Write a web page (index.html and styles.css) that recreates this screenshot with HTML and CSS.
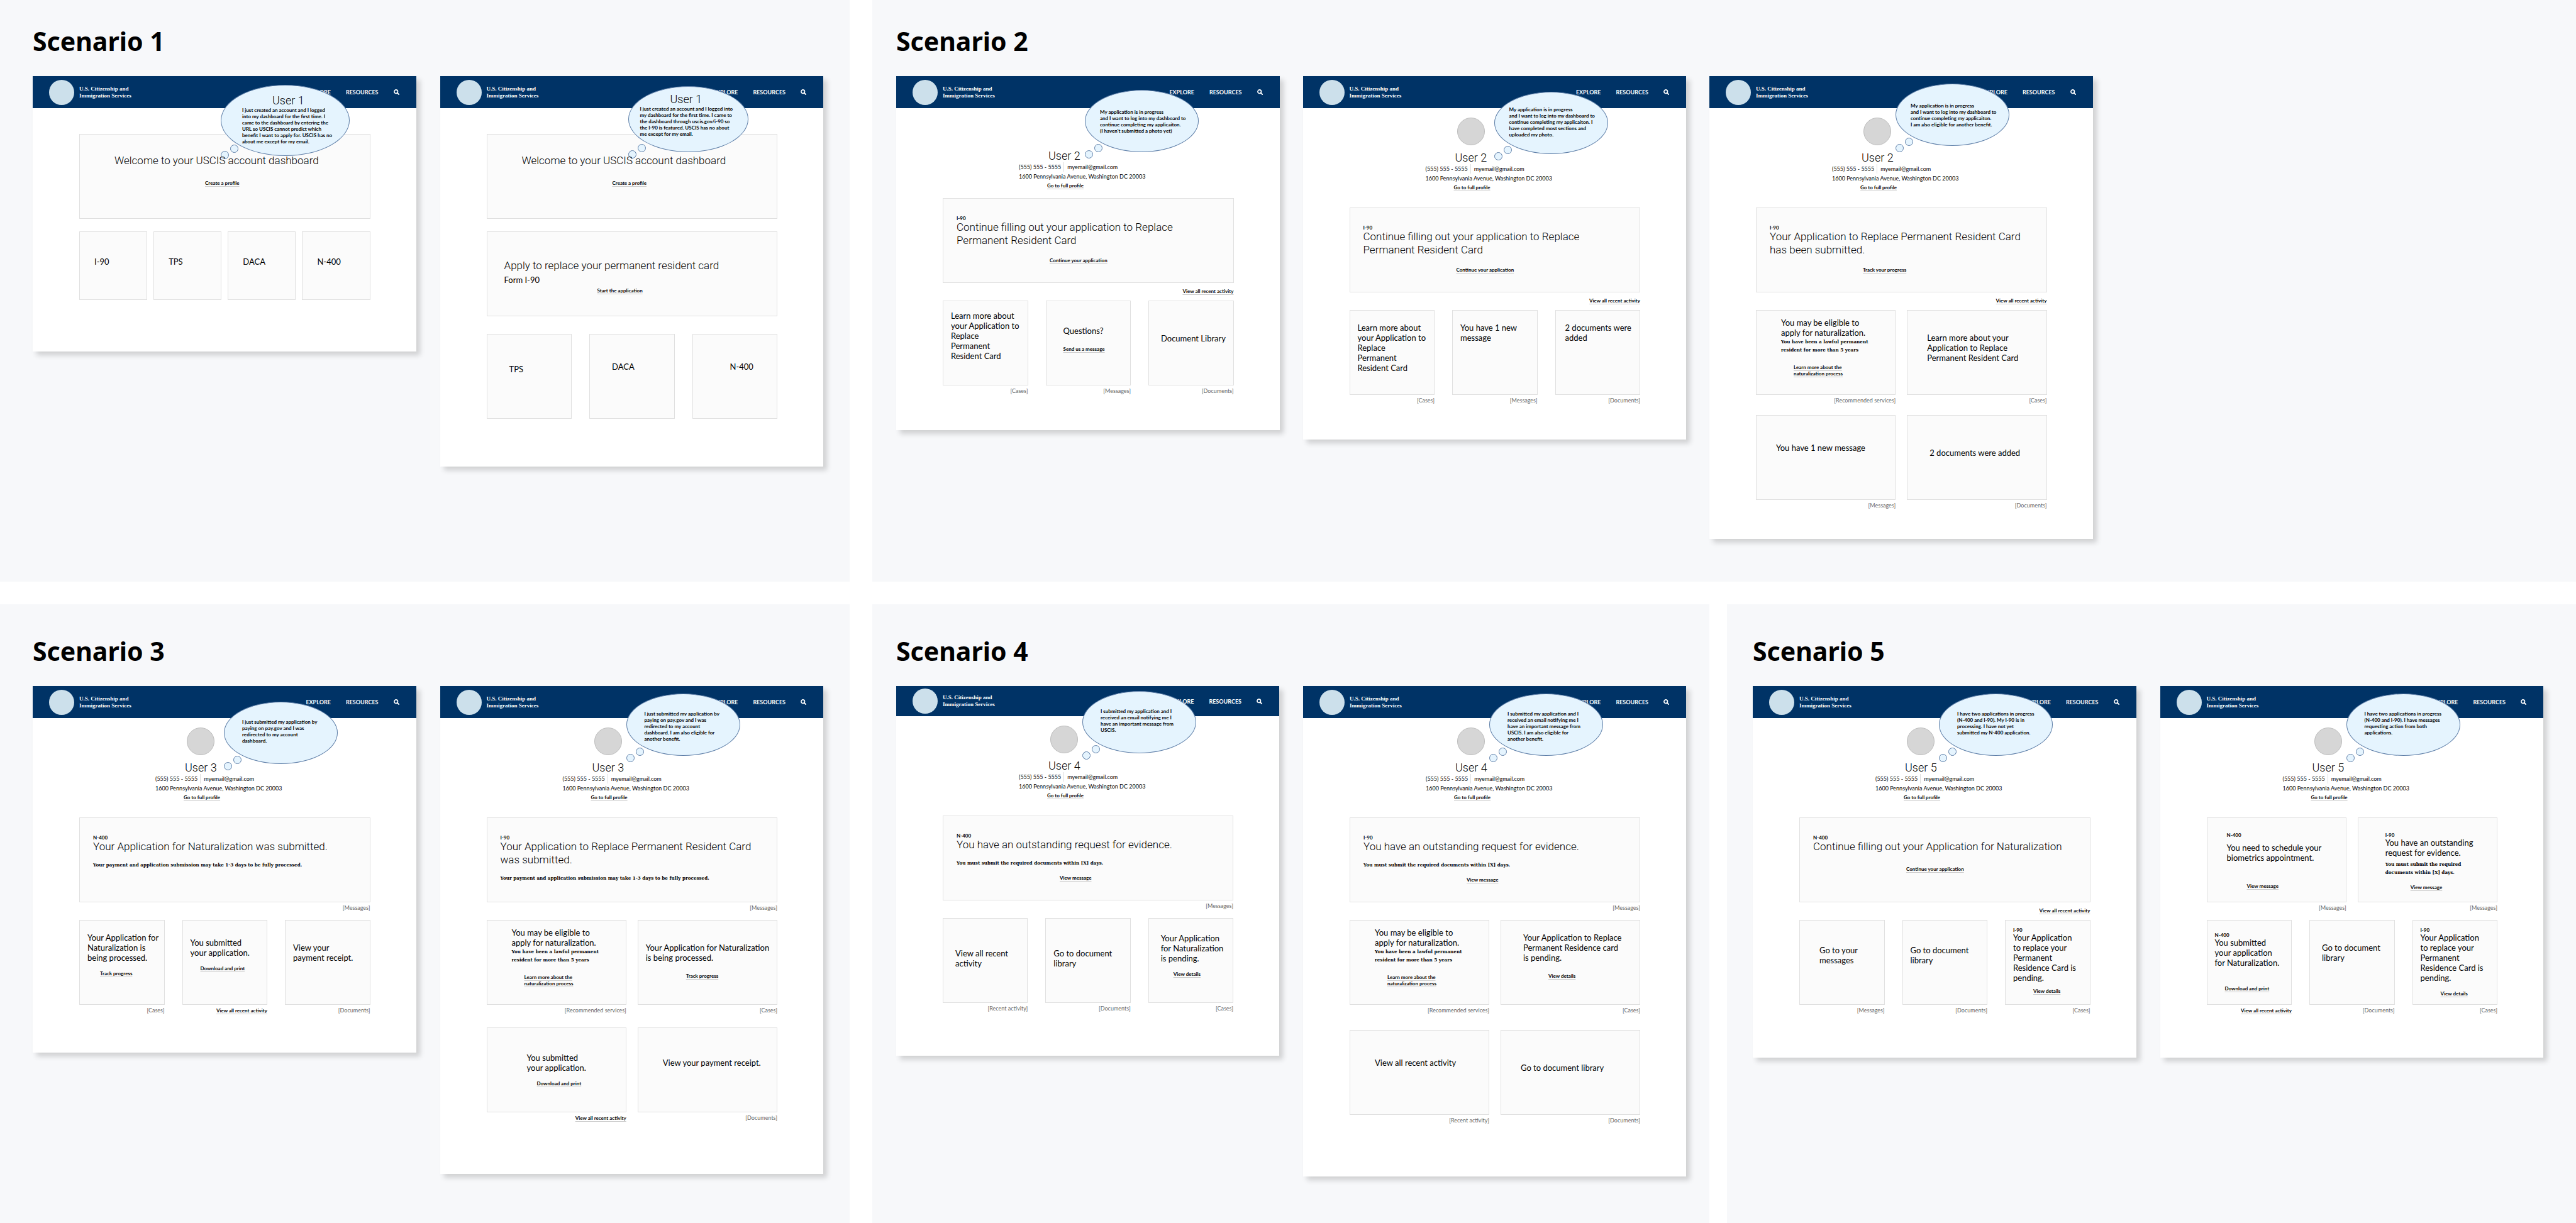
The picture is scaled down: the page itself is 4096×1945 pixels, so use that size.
FILE: index.html
```html
<!DOCTYPE html>
<html lang="en">
<head>
<meta charset="utf-8">
<title>USCIS dashboard scenarios</title>
<link rel="stylesheet" href="styles.css">
</head>
<body>
<svg class="sprite" aria-hidden="true">
  <symbol id="search" viewBox="0 0 10 10">
    <circle cx="4.1" cy="4.1" r="3.1" fill="none" stroke="currentColor" stroke-width="1.8"/>
    <path d="M6.3 6.3 9.1 9.1" stroke="currentColor" stroke-width="2" stroke-linecap="round"/>
  </symbol>
</svg>
<main class="board">
  <div class="row row-top">
    <section class="panel panel-1">
      <h1 class="title">Scenario 1</h1>
      <div class="frames">
        <article class="frame end-82">
          <header class="bar"><span class="logo"></span><p class="brand">U.S. Citizenship and<br>Immigration Services</p><nav class="nav"><a href="#">EXPLORE</a><a href="#">RESOURCES</a><a href="#" aria-label="Search"><svg class="icon"><use href="#search"/></svg></a></nav></header>
          <div class="bubble bubble-big"><h2 class="who">User 1</h2><p>I just created an account and I logged<br>into my dashboard for the first time. I<br>came to the dashboard by entering the<br>URL so USCIS cannot predict which<br>benefit I want to apply for. USCIS has no<br>about me except for my email.</p></div>
          <div class="content content-first">
            <div class="card hero pt-32 pl-56"><h3 class="headline">Welcome to your USCIS account dashboard</h3><a class="link mt-20 ml-144" href="#">Create a profile</a></div>
            <div class="cols cols-4 mt-20">
              <div class="card short pt-40 pl-24"><h4 class="name">I-90</h4></div>
              <div class="card short pt-40 pl-24"><h4 class="name">TPS</h4></div>
              <div class="card short pt-40 pl-24"><h4 class="name">DACA</h4></div>
              <div class="card short pt-40 pl-24"><h4 class="name">N-400</h4></div>
            </div>
          </div>
        </article>
        <article class="frame end-76">
          <header class="bar"><span class="logo"></span><p class="brand">U.S. Citizenship and<br>Immigration Services</p><nav class="nav"><a href="#">EXPLORE</a><a href="#">RESOURCES</a><a href="#" aria-label="Search"><svg class="icon"><use href="#search"/></svg></a></nav></header>
          <div class="bubble bubble-mid"><h2 class="who">User 1</h2><p>I just created an account and I logged into<br>my dashboard for the first time. I came to<br>the dashboard through uscis.gov/i-90 so<br>the I-90 is featured. USCIS has no about<br>me except for my email.</p></div>
          <div class="content content-first">
            <div class="card hero pt-32 pl-56"><h3 class="headline">Welcome to your USCIS account dashboard</h3><a class="link mt-20 ml-144" href="#">Create a profile</a></div>
            <div class="card hero mt-20 pt-44 pl-28"><h3 class="headline">Apply to replace your permanent resident card</h3><p class="name mt-4">Form I-90</p><a class="link mt-4 ml-148" href="#">Start the application</a></div>
            <div class="cols cols-3 mt-28">
              <div class="card pt-48 pl-36"><h4 class="name">TPS</h4></div>
              <div class="card pt-44 pl-36"><h4 class="name">DACA</h4></div>
              <div class="card pt-44 pl-60"><h4 class="name">N-400</h4></div>
            </div>
          </div>
        </article>
      </div>
    </section>
    <section class="panel panel-2">
      <h1 class="title">Scenario 2</h1>
      <div class="frames">
        <article class="frame end-43">
          <header class="bar"><span class="logo"></span><p class="brand">U.S. Citizenship and<br>Immigration Services</p><nav class="nav"><a href="#">EXPLORE</a><a href="#">RESOURCES</a><a href="#" aria-label="Search"><svg class="icon"><use href="#search"/></svg></a></nav></header>
          <div class="bubble bubble-plain"><p>My application is in progress<br>and I want to log into my dashboard to<br>continue completing my applicaiton.<br>(I haven't submitted a photo yet)</p></div>
          <div class="profile profile-plain"><h2 class="who">User 2</h2><p class="contact"><span>(555) 555 - 5555</span><span class="email">myemail@gmail.com</span></p><p class="contact">1600 Pennsylvania Avenue, Washington DC 20003</p><a class="link" href="#">Go to full profile</a></div>
          <div class="content">
            <div class="card hero hero-form"><p class="form">I-90</p><h3 class="headline">Continue filling out your application to Replace<br>Permanent Resident Card</h3><a class="link mt-16 ml-148" href="#">Continue your application</a></div>
            <div class="note note-low"><a class="link" href="#">View all recent activity</a></div>
            <div class="cols cols-3">
              <div><div class="card pt-16"><h4 class="name">Learn more about<br>your Application to<br>Replace<br>Permanent<br>Resident Card</h4></div><p class="note">[Cases]</p></div>
              <div><div class="card pt-40 pl-28"><h4 class="name">Questions?</h4><a class="link mt-16" href="#">Send us a message</a></div><p class="note">[Messages]</p></div>
              <div><div class="card pt-52 pl-20"><h4 class="name">Document Library</h4></div><p class="note">[Documents]</p></div>
            </div>
          </div>
        </article>
        <article class="frame end-43">
          <header class="bar"><span class="logo"></span><p class="brand">U.S. Citizenship and<br>Immigration Services</p><nav class="nav"><a href="#">EXPLORE</a><a href="#">RESOURCES</a><a href="#" aria-label="Search"><svg class="icon"><use href="#search"/></svg></a></nav></header>
          <div class="bubble bubble-low bubble-five"><p>My application is in progress<br>and I want to log into my dashboard to<br>continue completing my applicaiton. I<br>have completed most sections and<br>uploaded my photo.</p></div>
          <div class="profile"><span class="avatar"></span><h2 class="who">User 2</h2><p class="contact"><span>(555) 555 - 5555</span><span class="email">myemail@gmail.com</span></p><p class="contact">1600 Pennsylvania Avenue, Washington DC 20003</p><a class="link" href="#">Go to full profile</a></div>
          <div class="content">
            <div class="card hero hero-form"><p class="form">I-90</p><h3 class="headline">Continue filling out your application to Replace<br>Permanent Resident Card</h3><a class="link mt-16 ml-148" href="#">Continue your application</a></div>
            <div class="note note-low"><a class="link" href="#">View all recent activity</a></div>
            <div class="cols cols-3">
              <div><div class="card pt-20"><h4 class="name">Learn more about<br>your Application to<br>Replace<br>Permanent<br>Resident Card</h4></div><p class="note">[Cases]</p></div>
              <div><div class="card pt-20"><h4 class="name">You have 1 new<br>message</h4></div><p class="note">[Messages]</p></div>
              <div><div class="card pt-20 pl-16"><h4 class="name">2 documents were<br>added</h4></div><p class="note">[Documents]</p></div>
            </div>
          </div>
        </article>
        <article class="frame end-34">
          <header class="bar"><span class="logo"></span><p class="brand">U.S. Citizenship and<br>Immigration Services</p><nav class="nav"><a href="#">EXPLORE</a><a href="#">RESOURCES</a><a href="#" aria-label="Search"><svg class="icon"><use href="#search"/></svg></a></nav></header>
          <div class="bubble bubble-left"><p>My application is in progress<br>and I want to log into my dashboard to<br>continue completing my applicaiton.<br>I am also eligible for another benefit.</p></div>
          <div class="profile"><span class="avatar"></span><h2 class="who">User 2</h2><p class="contact"><span>(555) 555 - 5555</span><span class="email">myemail@gmail.com</span></p><p class="contact">1600 Pennsylvania Avenue, Washington DC 20003</p><a class="link" href="#">Go to full profile</a></div>
          <div class="content">
            <div class="card hero hero-form"><p class="form">I-90</p><h3 class="headline">Your Application to Replace Permanent Resident Card<br>has been submitted.</h3><a class="link mt-16 ml-148" href="#">Track your progress</a></div>
            <div class="note note-low"><a class="link" href="#">View all recent activity</a></div>
            <div class="cols cols-2">
              <div><div class="card pt-12 pl-40"><h4 class="name">You may be eligible to<br>apply for naturalization.</h4><p class="detail">You have been a lawful permanent<br>resident for more than 5 years</p><a class="link mt-16 ml-20" href="#">Learn more about the<br>naturalization process</a></div><p class="note">[Recommended services]</p></div>
              <div><div class="card pt-36 pl-32"><h4 class="name">Learn more about your<br>Application to Replace<br>Permanent Resident Card</h4></div><p class="note">[Cases]</p></div>
            </div>
            <div class="cols cols-2 mt-4">
              <div><div class="card pt-44 pl-32"><h4 class="name">You have 1 new message</h4></div><p class="note">[Messages]</p></div>
              <div><div class="card pt-52 pl-36"><h4 class="name">2 documents were added</h4></div><p class="note">[Documents]</p></div>
            </div>
          </div>
        </article>
      </div>
    </section>
  </div>
  <div class="row row-bottom">
    <section class="panel panel-3">
      <h1 class="title">Scenario 3</h1>
      <div class="frames">
        <article class="frame end-48">
          <header class="bar"><span class="logo"></span><p class="brand">U.S. Citizenship and<br>Immigration Services</p><nav class="nav"><a href="#">EXPLORE</a><a href="#">RESOURCES</a><a href="#" aria-label="Search"><svg class="icon"><use href="#search"/></svg></a></nav></header>
          <div class="bubble bubble-low"><p>I just submitted my application by<br>paying on pay.gov and I was<br>redirected to my account<br>dashboard.</p></div>
          <div class="profile"><span class="avatar"></span><h2 class="who">User 3</h2><p class="contact"><span>(555) 555 - 5555</span><span class="email">myemail@gmail.com</span></p><p class="contact">1600 Pennsylvania Avenue, Washington DC 20003</p><a class="link" href="#">Go to full profile</a></div>
          <div class="content">
            <div class="card hero hero-form"><p class="form">N-400</p><h3 class="headline">Your Application for Naturalization was submitted.</h3><p class="detail mt-12">Your payment and application submission may take 1-3 days to be fully processed.</p></div>
            <p class="note">[Messages]</p>
            <div class="cols cols-3">
              <div><div class="card pt-20"><h4 class="name">Your Application for<br>Naturalization is<br>being processed.</h4><a class="link mt-12 ml-20" href="#">Track progress</a></div><p class="note">[Cases]</p></div>
              <div><div class="card pt-28"><h4 class="name">You submitted<br>your application.</h4><a class="link mt-12 ml-16" href="#">Download and print</a></div><div class="note"><a class="link" href="#">View all recent activity</a></div></div>
              <div><div class="card pt-36"><h4 class="name">View your<br>payment receipt.</h4></div><p class="note">[Documents]</p></div>
            </div>
          </div>
        </article>
        <article class="frame end-70">
          <header class="bar"><span class="logo"></span><p class="brand">U.S. Citizenship and<br>Immigration Services</p><nav class="nav"><a href="#">EXPLORE</a><a href="#">RESOURCES</a><a href="#" aria-label="Search"><svg class="icon"><use href="#search"/></svg></a></nav></header>
          <div class="bubble"><p>I just submitted my application by<br>paying on pay.gov and I was<br>redirected to my account<br>dashboard. I am also eligible for<br>another benefit.</p></div>
          <div class="profile"><span class="avatar"></span><h2 class="who">User 3</h2><p class="contact"><span>(555) 555 - 5555</span><span class="email">myemail@gmail.com</span></p><p class="contact">1600 Pennsylvania Avenue, Washington DC 20003</p><a class="link" href="#">Go to full profile</a></div>
          <div class="content">
            <div class="card hero hero-form"><p class="form">I-90</p><h3 class="headline">Your Application to Replace Permanent Resident Card<br>was submitted.</h3><p class="detail mt-12">Your payment and application submission may take 1-3 days to be fully processed.</p></div>
            <p class="note">[Messages]</p>
            <div class="cols cols-2">
              <div><div class="card pt-12 pl-40"><h4 class="name">You may be eligible to<br>apply for naturalization.</h4><p class="detail">You have been a lawful permanent<br>resident for more than 5 years</p><a class="link mt-16 ml-20" href="#">Learn more about the<br>naturalization process</a></div><p class="note">[Recommended services]</p></div>
              <div><div class="card pt-36"><h4 class="name">Your Application for Naturalization<br>is being processed.</h4><a class="link mt-16 ml-64" href="#">Track progress</a></div><p class="note">[Cases]</p></div>
            </div>
            <div class="cols cols-2 mt-8">
              <div><div class="card pt-40 pl-64"><h4 class="name">You submitted<br>your application.</h4><a class="link mt-12 ml-16" href="#">Download and print</a></div><div class="note"><a class="link" href="#">View all recent activity</a></div></div>
              <div><div class="card pt-48 pl-40"><h4 class="name">View your payment receipt.</h4></div><p class="note">[Documents]</p></div>
            </div>
          </div>
        </article>
      </div>
    </section>
    <section class="panel panel-4">
      <h1 class="title">Scenario 4</h1>
      <div class="frames">
        <article class="frame end-56 frame-tight">
          <header class="bar"><span class="logo"></span><p class="brand">U.S. Citizenship and<br>Immigration Services</p><nav class="nav"><a href="#">EXPLORE</a><a href="#">RESOURCES</a><a href="#" aria-label="Search"><svg class="icon"><use href="#search"/></svg></a></nav></header>
          <div class="bubble"><p>I submitted my application and I<br>received an email notifying me I<br>have an important message from<br>USCIS.</p></div>
          <div class="profile"><span class="avatar"></span><h2 class="who">User 4</h2><p class="contact"><span>(555) 555 - 5555</span><span class="email">myemail@gmail.com</span></p><p class="contact">1600 Pennsylvania Avenue, Washington DC 20003</p><a class="link" href="#">Go to full profile</a></div>
          <div class="content">
            <div class="card hero hero-form"><p class="form">N-400</p><h3 class="headline">You have an outstanding request for evidence.</h3><p class="detail mt-12">You must submit the required documents within [X] days.</p><a class="link mt-12 ml-164" href="#">View message</a></div>
            <p class="note">[Messages]</p>
            <div class="cols cols-3">
              <div><div class="card pt-48 pl-20"><h4 class="name">View all recent<br>activity</h4></div><p class="note">[Recent activity]</p></div>
              <div><div class="card pt-48"><h4 class="name">Go to document<br>library</h4></div><p class="note">[Documents]</p></div>
              <div><div class="card pt-24 pl-20"><h4 class="name">Your Application<br>for Naturalization<br>is pending.</h4><a class="link mt-12 ml-20" href="#">View details</a></div><p class="note">[Cases]</p></div>
            </div>
          </div>
        </article>
        <article class="frame end-70">
          <header class="bar"><span class="logo"></span><p class="brand">U.S. Citizenship and<br>Immigration Services</p><nav class="nav"><a href="#">EXPLORE</a><a href="#">RESOURCES</a><a href="#" aria-label="Search"><svg class="icon"><use href="#search"/></svg></a></nav></header>
          <div class="bubble"><p>I submitted my application and I<br>received an email notifying me I<br>have an important message from<br>USCIS. I am also eligible for<br>another benefit.</p></div>
          <div class="profile"><span class="avatar"></span><h2 class="who">User 4</h2><p class="contact"><span>(555) 555 - 5555</span><span class="email">myemail@gmail.com</span></p><p class="contact">1600 Pennsylvania Avenue, Washington DC 20003</p><a class="link" href="#">Go to full profile</a></div>
          <div class="content">
            <div class="card hero hero-form"><p class="form">I-90</p><h3 class="headline">You have an outstanding request for evidence.</h3><p class="detail mt-12">You must submit the required documents within [X] days.</p><a class="link mt-12 ml-164" href="#">View message</a></div>
            <p class="note">[Messages]</p>
            <div class="cols cols-2">
              <div><div class="card pt-12 pl-40"><h4 class="name">You may be eligible to<br>apply for naturalization.</h4><p class="detail">You have been a lawful permanent<br>resident for more than 5 years</p><a class="link mt-16 ml-20" href="#">Learn more about the<br>naturalization process</a></div><p class="note">[Recommended services]</p></div>
              <div><div class="card pt-20 pl-36"><h4 class="name">Your Application to Replace<br>Permanent Residence card<br>is pending.</h4><a class="link mt-16 ml-40" href="#">View details</a></div><p class="note">[Cases]</p></div>
            </div>
            <div class="cols cols-2 mt-12">
              <div><div class="card pt-44 pl-40"><h4 class="name">View all recent activity</h4></div><p class="note">[Recent activity]</p></div>
              <div><div class="card pt-52 pl-32"><h4 class="name">Go to document library</h4></div><p class="note">[Documents]</p></div>
            </div>
          </div>
        </article>
      </div>
    </section>
    <section class="panel panel-5">
      <h1 class="title">Scenario 5</h1>
      <div class="frames">
        <article class="frame end-56">
          <header class="bar"><span class="logo"></span><p class="brand">U.S. Citizenship and<br>Immigration Services</p><nav class="nav"><a href="#">EXPLORE</a><a href="#">RESOURCES</a><a href="#" aria-label="Search"><svg class="icon"><use href="#search"/></svg></a></nav></header>
          <div class="bubble"><p>I have two applications in progress<br>(N-400 and I-90). My I-90 is in<br>processing. I have not yet<br>submitted my N-400 application.</p></div>
          <div class="profile"><span class="avatar"></span><h2 class="who">User 5</h2><p class="contact"><span>(555) 555 - 5555</span><span class="email">myemail@gmail.com</span></p><p class="contact">1600 Pennsylvania Avenue, Washington DC 20003</p><a class="link" href="#">Go to full profile</a></div>
          <div class="content">
            <div class="card hero hero-form"><p class="form">N-400</p><h3 class="headline">Continue filling out your Application for Naturalization</h3><a class="link mt-20 ml-148" href="#">Continue your application</a></div>
            <div class="note note-low"><a class="link" href="#">View all recent activity</a></div>
            <div class="cols cols-3">
              <div><div class="card pt-40 pl-32"><h4 class="name">Go to your<br>messages</h4></div><p class="note">[Messages]</p></div>
              <div><div class="card pt-40"><h4 class="name">Go to document<br>library</h4></div><p class="note">[Documents]</p></div>
              <div><div class="card pt-12"><p class="form">I-90</p><h4 class="name">Your Application<br>to replace your<br>Permanent<br>Residence Card is<br>pending.</h4><a class="link mt-8 ml-32" href="#">View details</a></div><p class="note">[Cases]</p></div>
            </div>
          </div>
        </article>
        <article class="frame end-56">
          <header class="bar"><span class="logo"></span><p class="brand">U.S. Citizenship and<br>Immigration Services</p><nav class="nav"><a href="#">EXPLORE</a><a href="#">RESOURCES</a><a href="#" aria-label="Search"><svg class="icon"><use href="#search"/></svg></a></nav></header>
          <div class="bubble"><p>I have two applications in progress<br>(N-400 and I-90). I have messages<br>requesting action from both<br>applications.</p></div>
          <div class="profile"><span class="avatar"></span><h2 class="who">User 5</h2><p class="contact"><span>(555) 555 - 5555</span><span class="email">myemail@gmail.com</span></p><p class="contact">1600 Pennsylvania Avenue, Washington DC 20003</p><a class="link" href="#">Go to full profile</a></div>
          <div class="content">
            <div class="cols cols-2">
              <div><div class="card pt-24 pl-32"><p class="form">N-400</p><h4 class="name mt-8">You need to schedule your<br>biometrics appointment.</h4><a class="link mt-32 ml-32" href="#">View message</a></div><p class="note">[Messages]</p></div>
              <div><div class="card pt-24 pl-44"><p class="form">I-90</p><h4 class="name">You have an outstanding<br>request for evidence.</h4><p class="detail mt-4">You must submit the required<br>documents within [X] days.</p><a class="link mt-12 ml-40" href="#">View message</a></div><p class="note">[Messages]</p></div>
            </div>
            <div class="cols cols-3">
              <div><div class="card pt-20"><p class="form">N-400</p><h4 class="name">You submitted<br>your application<br>for Naturalization.</h4><a class="link mt-28 ml-16" href="#">Download and print</a></div><div class="note"><a class="link" href="#">View all recent activity</a></div></div>
              <div><div class="card pt-36 pl-20"><h4 class="name">Go to document<br>library</h4></div><p class="note">[Documents]</p></div>
              <div><div class="card pt-12"><p class="form">I-90</p><h4 class="name">Your Application<br>to replace your<br>Permanent<br>Residence Card is<br>pending.</h4><a class="link mt-12 ml-32" href="#">View details</a></div><p class="note">[Cases]</p></div>
            </div>
          </div>
        </article>
      </div>
    </section>
  </div>
</main>
</body>
</html>
```
FILE: styles.css
```css
* { box-sizing: border-box; margin: 0; padding: 0; }

body {
  background: #fff;
  color: #000;
  font-family: Lato, "Open Sans", sans-serif;
  font-size: 13px;
}

a { color: inherit; text-decoration: none; }
h1, h2, h3, h4 { font-weight: 400; }
.sprite { display: none; }

/* board */
.board {
  display: grid;
  grid-template-rows: 925fr 984fr;
  gap: 36px;
  min-height: 100vh;
}
.row { display: grid; column-gap: 36px; }
.row-top { grid-template-columns: 1351fr 2709fr; }
.row-bottom { grid-template-columns: 1351fr 1331fr 1342fr; }

.panel { background: #f7f8fa; padding-top: 45px; }
.row-bottom .panel { padding-top: 54px; }
.panel-1, .panel-3 { padding-left: 52px; padding-right: 42px; }
.panel-2 { padding-left: 38px; padding-right: 122px; }
.panel-4 { padding-left: 38px; padding-right: 37px; }
.panel-5 { padding-left: 41px; padding-right: 52px; margin-left: -8px; }

.title {
  font: 700 41px/40px "Noto Sans", "Open Sans", sans-serif;
  margin-bottom: 36px;
}
.frames {
  display: grid;
  grid-template-columns: repeat(2, 1fr);
  gap: 38px;
  align-items: start;
}
.panel-2 .frames { grid-template-columns: repeat(4, 1fr); gap: 37px; }

/* wireframe page */
.frame {
  position: relative;
  background: #fff;
  box-shadow: 6px 6px 8px rgba(0, 0, 0, .16);
  white-space: nowrap;
}
.end-34 { padding-bottom: 34px; }
.end-43 { padding-bottom: 43px; }
.end-48 { padding-bottom: 48px; }
.end-56 { padding-bottom: 56px; }
.end-70 { padding-bottom: 70px; }
.end-76 { padding-bottom: 76px; }
.end-82 { padding-bottom: 82px; }

.bar {
  display: flex;
  align-items: center;
  height: 51px;
  padding: 0 27px 0 26px;
  background: #036;
  color: #fff;
}
.frame-tight .bar { height: 48px; }
.logo {
  width: 40px;
  height: 40px;
  border-radius: 50%;
  background: #cce0eb;
}
.brand {
  margin-left: 8px;
  font: 700 9px/11px "Liberation Serif", "DejaVu Serif", serif;
}
.nav {
  display: flex;
  align-items: center;
  gap: 24px;
  margin-left: auto;
  font-size: 9px;
  font-weight: 700;
}
.icon { display: block; width: 9px; height: 9px; }

/* thought bubble */
.bubble {
  position: absolute;
  z-index: 1;
  left: 296px;
  top: 12px;
  width: 181px;
  height: 99px;
  padding: 26px 0 0 28px;
  border: 1px solid #5f7fa8;
  border-radius: 50%;
  background: #e5f4fe;
  font-size: 8px;
  line-height: 10px;
  font-weight: 700;
}
.bubble::before, .bubble::after {
  content: "";
  position: absolute;
  width: 11px;
  height: 11px;
  border: 1px solid #5f7fa8;
  border-radius: 50%;
  background: #e5f4fe;
}
.bubble::before { left: 14px; bottom: -1px; }
.bubble::after { left: -1px; bottom: -11px; }
.bubble-big { left: 299px; top: 14px; width: 205px; height: 113px; padding: 14px 0 0 33px; }
.bubble-big::before { bottom: 4px; }
.bubble-big::after { bottom: -6px; }
.bubble-mid { left: 299px; top: 16px; width: 191px; height: 105px; padding: 10px 0 0 18px; }
.bubble-big .who, .bubble-mid .who { margin-left: 48px; }
.bubble-plain { left: 300px; top: 22px; padding: 29px 0 0 23px; }
.bubble-left { padding: 29px 0 0 23px; }
.bubble-low { left: 304px; top: 25px; }
.bubble-five { padding: 22px 0 0 23px; }
.frame-tight .bubble { top: 8px; }

.who { font-family: Roboto, Lato, sans-serif; font-size: 18px; line-height: 20px; font-weight: 300; }

/* profile */
.profile { padding: 15px 0 25px 195px; }
.profile-plain { padding: 66px 0 13px 195px; }
.profile .who { margin-left: 47px; }
.profile .link { margin-left: 45px; line-height: 14px; }
.avatar {
  display: block;
  width: 44px;
  height: 44px;
  margin: 0 0 10px 50px;
  border: 1px solid #bdbdbd;
  border-radius: 50%;
  background: #d6d6d6;
}
.contact { display: flex; font-size: 9px; line-height: 15px; }
.email { margin-left: 4px; padding-left: 5px; border-left: 1px solid #ddd; }

/* content */
.content { padding: 0 73px 0 74px; }
.content-first { padding-top: 41px; }
.card {
  height: 135px;
  padding-left: 13px;
  outline: 1px solid #e0e0e0;
  outline-offset: -1px;
  background: #fbfbfb;
}
.short { height: 109px; }
.hero-form { padding: 28px 0 0 22px; }
.form { font-size: 8px; line-height: 8px; font-weight: 700; }
.headline {
  position: relative;
  z-index: 2;
  font-family: Roboto, Lato, sans-serif;
  font-size: 17px;
  line-height: 21px;
  font-weight: 300;
}
.name { font-size: 13px; line-height: 16px; }
.detail { font: 700 8px/13px "DejaVu Serif Condensed", "Liberation Serif", serif; }
.link {
  display: block;
  width: max-content;
  font-size: 8px;
  line-height: 10px;
  font-weight: 700;
  color: #000;
  text-decoration: underline 1px #ccc;
  text-underline-offset: 2px;
}
.note {
  display: flex;
  justify-content: flex-end;
  height: 28px;
  padding-top: 4px;
  font-size: 9px;
  line-height: 10px;
  color: #666;
}
.note-low { padding-top: 8px; }
.cols { display: grid; }
.cols-2 { grid-template-columns: repeat(2, 1fr); column-gap: 18px; }
.cols-3 { grid-template-columns: repeat(3, 1fr); column-gap: 28px; }
.cols-4 { grid-template-columns: repeat(4, 1fr); column-gap: 10px; }

/* spacing scale */
.mt-4 { margin-top: 4px; }
.mt-8 { margin-top: 8px; }
.mt-12 { margin-top: 12px; }
.mt-16 { margin-top: 16px; }
.mt-20 { margin-top: 20px; }
.mt-28 { margin-top: 28px; }
.mt-32 { margin-top: 32px; }
.ml-16 { margin-left: 16px; }
.ml-20 { margin-left: 20px; }
.ml-32 { margin-left: 32px; }
.ml-40 { margin-left: 40px; }
.ml-64 { margin-left: 64px; }
.ml-144 { margin-left: 144px; }
.ml-148 { margin-left: 148px; }
.ml-164 { margin-left: 164px; }
.pt-12 { padding-top: 12px; }
.pt-16 { padding-top: 16px; }
.pt-20 { padding-top: 20px; }
.pt-24 { padding-top: 24px; }
.pt-28 { padding-top: 28px; }
.pt-32 { padding-top: 32px; }
.pt-36 { padding-top: 36px; }
.pt-40 { padding-top: 40px; }
.pt-44 { padding-top: 44px; }
.pt-48 { padding-top: 48px; }
.pt-52 { padding-top: 52px; }
.pl-16 { padding-left: 16px; }
.pl-20 { padding-left: 20px; }
.pl-24 { padding-left: 24px; }
.pl-28 { padding-left: 28px; }
.pl-32 { padding-left: 32px; }
.pl-36 { padding-left: 36px; }
.pl-40 { padding-left: 40px; }
.pl-44 { padding-left: 44px; }
.pl-56 { padding-left: 56px; }
.pl-60 { padding-left: 60px; }
.pl-64 { padding-left: 64px; }
```
